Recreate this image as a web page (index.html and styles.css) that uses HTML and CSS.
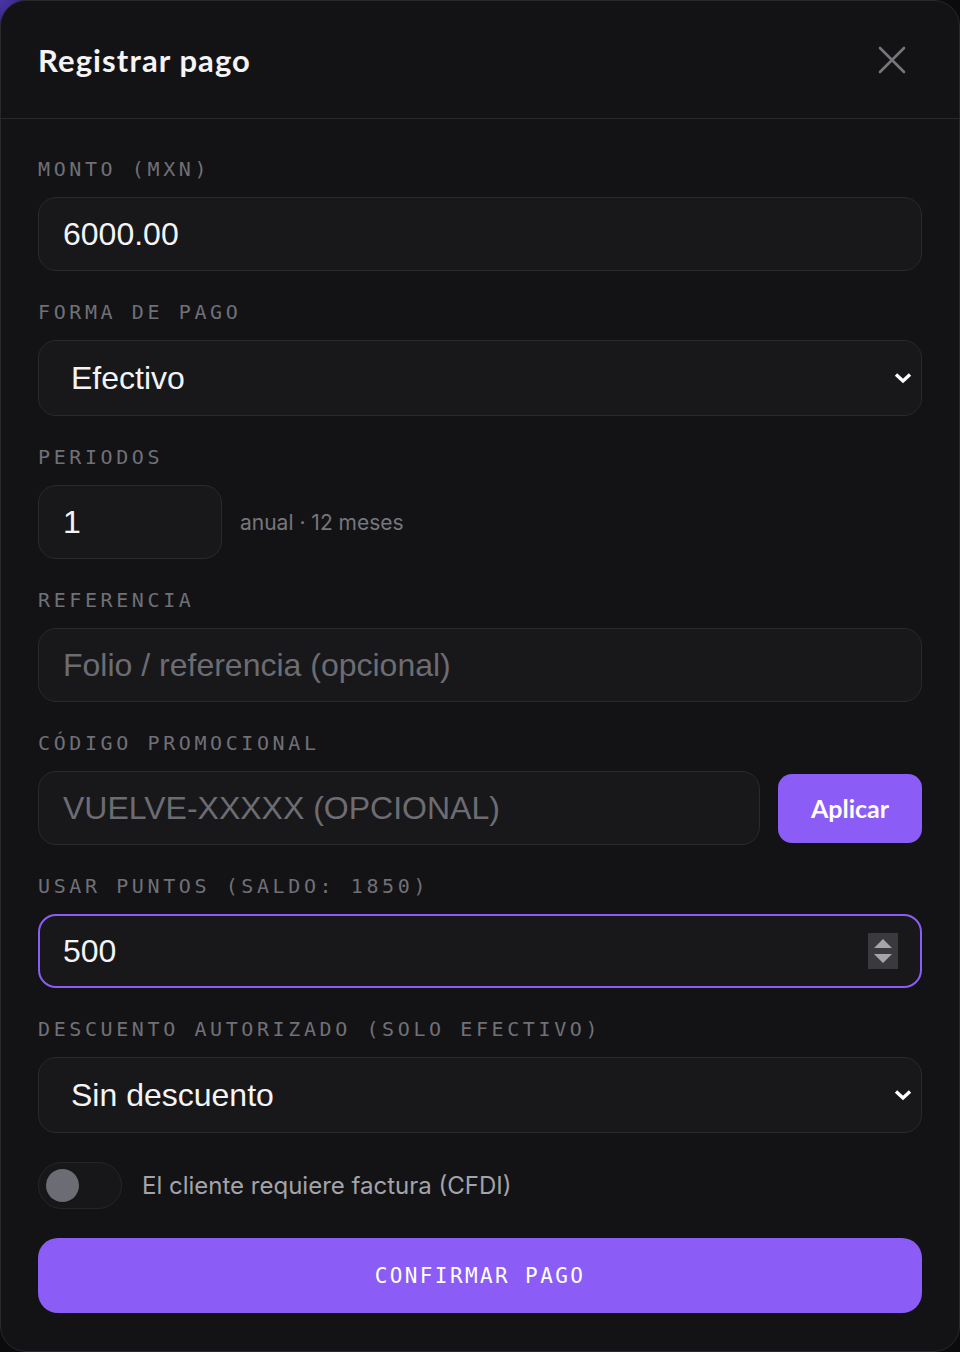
FILE: index.html
```html
<!DOCTYPE html>
<html lang="es">
<head>
  <meta charset="UTF-8" />
  <title>Registrar pago</title>
  <link rel="stylesheet" href="styles.css">
</head>
<body>
  <div class="modal">
    <div class="modal-header">
      <h2>Registrar pago</h2>
      <button class="close" aria-label="Cerrar">
        <svg width="30" height="30" viewBox="0 0 30 30"><path d="M3 3 L27 27 M27 3 L3 27" stroke="#76767c" stroke-width="2.6" stroke-linecap="round" fill="none"/></svg>
      </button>
    </div>

    <form class="modal-body" onsubmit="return false">
      <div class="field">
        <label>Monto (MXN)</label>
        <input class="input" type="text" value="6000.00" />
      </div>

      <div class="field">
        <label>Forma de pago</label>
        <div class="select-wrap">
          <select>
            <option>Efectivo</option>
            <option>Tarjeta</option>
            <option>Transferencia</option>
          </select>
          <svg class="chev" width="20" height="12" viewBox="0 0 20 12"><path d="M3 2.5 L10 9 L17 2.5" stroke="#fff" stroke-width="3.4" fill="none"/></svg>
        </div>
      </div>

      <div class="field">
        <label>Periodos</label>
        <div class="row">
          <input class="input small" type="text" value="1" />
          <span class="hint">anual · 12 meses</span>
        </div>
      </div>

      <div class="field">
        <label>Referencia</label>
        <input class="input" type="text" placeholder="Folio / referencia (opcional)" />
      </div>

      <div class="field">
        <label>Código promocional</label>
        <div class="row">
          <input class="input grow" type="text" placeholder="VUELVE-XXXXX (OPCIONAL)" />
          <button class="btn-apply">Aplicar</button>
        </div>
      </div>

      <div class="field">
        <label>Usar puntos (saldo: 1850)</label>
        <div class="number-wrap">
          <input type="text" value="500" />
          <span class="spinner">
            <svg width="30" height="36" viewBox="0 0 30 36"><rect width="30" height="36" fill="#3a3a3e"/><path d="M6 15 L15 6 L24 15 Z M6 21 L24 21 L15 30 Z" fill="#a5a5aa"/></svg>
          </span>
        </div>
      </div>

      <div class="field">
        <label>Descuento autorizado (solo efectivo)</label>
        <div class="select-wrap">
          <select>
            <option>Sin descuento</option>
            <option>5%</option>
            <option>10%</option>
          </select>
          <svg class="chev" width="20" height="12" viewBox="0 0 20 12"><path d="M3 2.5 L10 9 L17 2.5" stroke="#fff" stroke-width="3.4" fill="none"/></svg>
        </div>
      </div>

      <div class="toggle-row">
        <span class="toggle"><span class="knob"></span></span>
        <span class="toggle-label">El cliente requiere factura (CFDI)</span>
      </div>

      <button class="btn-confirm">Confirmar pago</button>
    </form>
  </div>
</body>
</html>
```

FILE: styles.css
```css
html, body {
  margin: 0;
  padding: 0;
}

body {
  background: radial-gradient(circle at 0 0, #4a34a8 0, #2b1f66 40px, #0b0b0d 120px),
              #0b0b0d;
  font-family: 'Lato', 'Inter', sans-serif;
  color: #f2f2f4;
}

.modal {
  background: #131315;
  border: 1px solid #29292d;
  border-radius: 26px;
  box-sizing: border-box;
  width: 960px;
  height: 1352px;
  overflow: hidden;
}

.modal-header {
  display: flex;
  align-items: center;
  justify-content: space-between;
  height: 117px;
  padding: 0 52px 0 37px;
  border-bottom: 1px solid #29292d;
}

.modal-header h2 {
  margin: 0;
  font-size: 31px;
  font-weight: 700;
  color: #f4f4f6;
  letter-spacing: 1.1px;
}

.close {
  background: none;
  border: none;
  padding: 0;
  display: flex;
  cursor: pointer;
}

.modal-body {
  padding: 39px 37px 37px 37px;
  display: flex;
  flex-direction: column;
}

.field {
  display: flex;
  flex-direction: column;
  margin-bottom: 30px;
}

.field label {
  font-family: 'DejaVu Sans Mono', 'Liberation Mono', monospace;
  font-size: 20px;
  line-height: 22px;
  letter-spacing: 3.6px;
  text-transform: uppercase;
  color: #707077;
  margin-bottom: 17px;
}

.input,
.number-wrap,
.select-wrap {
  box-sizing: border-box;
  height: 74px;
  background: #18181a;
  border: 1px solid #2a2a2e;
  border-radius: 18px;
  color: #f4f4f6;
  font-family: 'Liberation Sans', Arial, sans-serif;
  font-size: 32px;
  padding: 0 24px;
  outline: none;
}

.input::placeholder {
  color: #6c6c72;
}

.small {
  width: 184px;
  flex: none;
}

.grow {
  flex: 1;
  min-width: 0;
}

.row {
  display: flex;
  align-items: center;
  gap: 18px;
}

.hint {
  font-family: 'Inter', 'Lato', sans-serif;
  font-size: 21px;
  color: #76767d;
}

.btn-apply {
  height: 69px;
  width: 144px;
  flex: none;
  border: none;
  border-radius: 14px;
  background: #8b5cf6;
  color: #fff;
  font-family: 'Lato', sans-serif;
  font-weight: 700;
  font-size: 25px;
  cursor: pointer;
}

.select-wrap {
  display: flex;
  align-items: center;
  height: 76px;
  padding: 0 8px 0 24px;
}

.select-wrap select {
  flex: 1;
  appearance: none;
  -webkit-appearance: none;
  background: transparent;
  border: none;
  outline: none;
  color: #f4f4f6;
  font-family: 'Liberation Sans', Arial, sans-serif;
  font-size: 32px;
  padding: 0 0 0 8px;
  height: 100%;
}

.chev {
  flex: none;
}

.number-wrap {
  display: flex;
  align-items: center;
  border: 2px solid #8b5cf6;
  padding: 0 22px 0 23px;
}

.number-wrap input {
  flex: 1;
  background: transparent;
  border: none;
  outline: none;
  color: #f4f4f6;
  font-family: 'Liberation Sans', Arial, sans-serif;
  font-size: 32px;
  padding: 0;
}

.spinner {
  display: flex;
}

.toggle-row {
  display: flex;
  align-items: center;
  gap: 20px;
  margin: -1px 0 29px;
}

.toggle {
  box-sizing: border-box;
  width: 84px;
  height: 47px;
  border-radius: 24px;
  background: #171719;
  border: 1px solid #26262a;
  display: flex;
  align-items: center;
  padding-left: 7px;
}

.knob {
  width: 33px;
  height: 33px;
  border-radius: 50%;
  background: #6c6c75;
}

.toggle-label {
  font-family: 'Inter', 'Lato', sans-serif;
  font-size: 24px;
  color: #a3a3aa;
}

.btn-confirm {
  height: 75px;
  border: none;
  border-radius: 20px;
  background: #8b5cf6;
  color: #fff;
  font-family: 'DejaVu Sans Mono', 'Liberation Mono', monospace;
  font-size: 21px;
  letter-spacing: 2.4px;
  text-transform: uppercase;
  cursor: pointer;
}
```
